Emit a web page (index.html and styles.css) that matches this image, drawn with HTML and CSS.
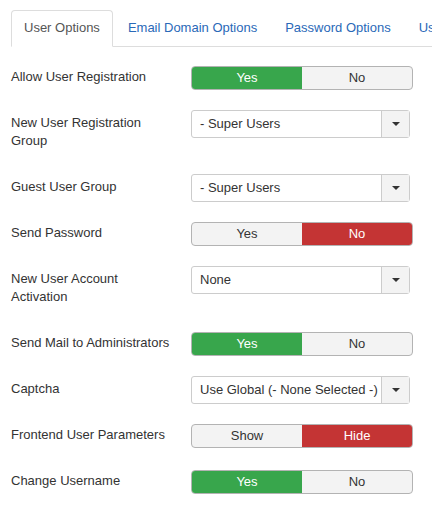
FILE: index.html
```html
<!DOCTYPE html>
<html lang="en">
<head>
    <meta charset="UTF-8">
    <meta name="viewport" content="width=device-width, initial-scale=1.0">
    <title>User Options</title>
    <link rel="stylesheet" href="styles.css">
</head>
<body>
    <div class="page">
        <ul class="tabs">
            <li class="tab active">User Options</li>
            <li class="tab">Email Domain Options</li>
            <li class="tab">Password Options</li>
            <li class="tab">User Notes History</li>
        </ul>

        <div class="form">
            <div class="row">
                <div class="label">Allow User Registration</div>
                <div class="toggle">
                    <span class="opt yes">Yes</span>
                    <span class="opt">No</span>
                </div>
            </div>
            <div class="row">
                <div class="label">New User Registration Group</div>
                <div class="select">
                    <span class="value">- Super Users</span>
                    <span class="arrow"></span>
                </div>
            </div>
            <div class="row">
                <div class="label">Guest User Group</div>
                <div class="select">
                    <span class="value">- Super Users</span>
                    <span class="arrow"></span>
                </div>
            </div>
            <div class="row">
                <div class="label">Send Password</div>
                <div class="toggle">
                    <span class="opt">Yes</span>
                    <span class="opt no">No</span>
                </div>
            </div>
            <div class="row">
                <div class="label">New User Account Activation</div>
                <div class="select">
                    <span class="value">None</span>
                    <span class="arrow"></span>
                </div>
            </div>
            <div class="row">
                <div class="label">Send Mail to Administrators</div>
                <div class="toggle">
                    <span class="opt yes">Yes</span>
                    <span class="opt">No</span>
                </div>
            </div>
            <div class="row">
                <div class="label">Captcha</div>
                <div class="select">
                    <span class="value">Use Global (- None Selected -)</span>
                    <span class="arrow"></span>
                </div>
            </div>
            <div class="row">
                <div class="label">Frontend User Parameters</div>
                <div class="toggle">
                    <span class="opt">Show</span>
                    <span class="opt no">Hide</span>
                </div>
            </div>
            <div class="row">
                <div class="label">Change Username</div>
                <div class="toggle">
                    <span class="opt yes">Yes</span>
                    <span class="opt">No</span>
                </div>
            </div>
        </div>
    </div>
</body>
</html>
```

FILE: styles.css
```css
body {
    margin: 0;
    font-family: "Liberation Sans", Arial, sans-serif;
    font-size: 13px;
    line-height: 18px;
    color: #333;
    background-color: #fff;
    overflow: hidden;
}
.page {
    padding: 10px 0 0 11px;
}
.tabs {
    display: flex;
    margin: 0;
    padding: 0;
    list-style: none;
    white-space: nowrap;
    border-bottom: 1px solid #ddd;
}
.tab {
    padding: 8px 12px 9px;
    margin-right: 2px;
    margin-bottom: -1px;
    border: 1px solid transparent;
    border-radius: 4px 4px 0 0;
    color: #2a69b8;
    flex-shrink: 0;
}
.tab.active {
    color: #555;
    background-color: #fff;
    border-color: #ddd #ddd transparent;
}
.form {
    padding-top: 17px;
}
.row {
    display: flex;
    align-items: flex-start;
    margin-bottom: 18px;
}
.label {
    width: 160px;
    margin-right: 20px;
    padding: 4px 0 6px;
}
.toggle {
    display: flex;
    width: 222px;
    height: 24px;
    margin: 2px 0;
    box-sizing: border-box;
    border: 1px solid #b3b3b3;
    border-radius: 4px;
    overflow: hidden;
    background-color: #f3f3f3;
}
.opt {
    flex: 1;
    text-align: center;
    line-height: 22px;
    color: #333;
}
.opt.yes {
    background-color: #38a64c;
    color: #fff;
}
.opt.no {
    background-color: #c43434;
    color: #fff;
}
.select {
    display: flex;
    width: 219px;
    height: 28px;
    box-sizing: border-box;
    border: 1px solid #ccc;
    border-radius: 3px;
    background-color: #fff;
}
.value {
    flex: 1;
    padding-left: 8px;
    line-height: 26px;
    white-space: nowrap;
    overflow: hidden;
}
.arrow {
    width: 27px;
    border-left: 1px solid #ccc;
    background-color: #f3f3f3;
    display: flex;
    align-items: center;
    justify-content: center;
}
.arrow::after {
    content: "";
    border-left: 4px solid transparent;
    border-right: 4px solid transparent;
    border-top: 4px solid #333;
}
```
